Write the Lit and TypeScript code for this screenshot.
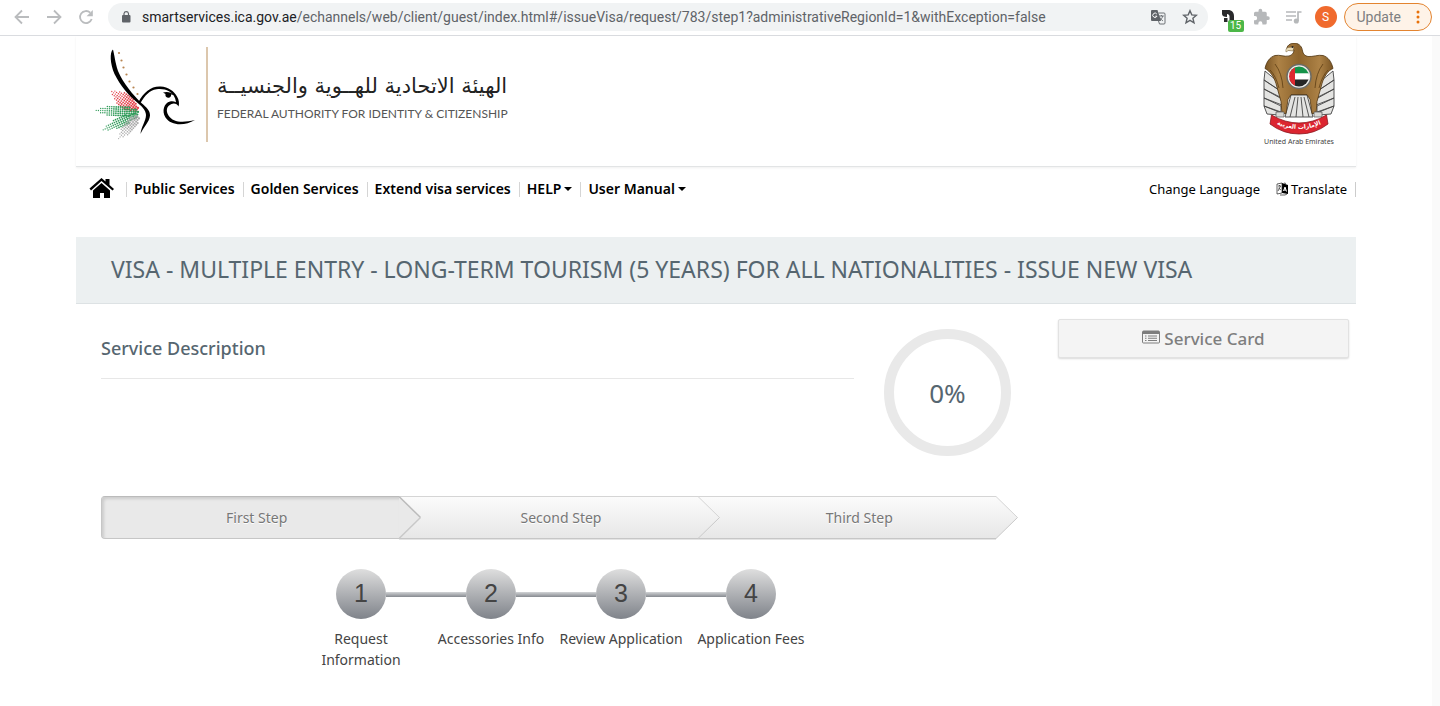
import { LitElement, html, css, svg } from "lit";
import { customElement } from "lit/decorators.js";

@customElement("browser-bar")
export class BrowserBar extends LitElement {
  static styles = css`
    :host { display: block; border-bottom: 1px solid #dadce0; background: #fff; }
    .bar { display: flex; align-items: center; box-sizing: border-box; height: 35px; padding: 0 8px 2px 12px; font-family: Roboto, sans-serif; }
    button { border: 0; background: none; padding: 0; display: grid; place-items: center; color: #5f6368; cursor: pointer; }
    .nav { display: flex; gap: 12px; }
    .nav button { width: 20px; height: 20px; color: #babcbe; }
    .omnibox { flex: 1; display: flex; align-items: center; gap: 10px; height: 28px; margin-left: 12px; padding: 0 10px 0 12px; border-radius: 14px; background: #f1f3f4; }
    .url { flex: 1; white-space: nowrap; overflow: hidden; font: 14px/20px Roboto, sans-serif; color: #5f6368; text-decoration: none; }
    .url b { font-weight: 400; color: #202124; }
    .omnibox button { width: 16px; height: 16px; margin-left: 6px; }
    .tools { display: flex; align-items: center; gap: 12px; margin-left: 9px; }
    .tools .ext { position: relative; width: 20px; height: 20px; }
    .count { position: absolute; right: -7px; bottom: -5px; width: 16px; height: 12px; border-radius: 2px; background: #4cb748; color: #fff; font: 10px/12px Roboto, sans-serif; }
    .tools .avatar { width: 22px; height: 22px; border-radius: 50%; background: #f06a2d; color: #fff; font: 12px Roboto, sans-serif; }
    .tools .update { display: flex; align-items: center; gap: 14px; box-sizing: border-box; height: 28px; margin-left: -5px; padding: 0 10px 0 12px; border: 1px solid #e38430; border-radius: 14px; background: #fef3e8; color: #7d7e80; font: 14px Roboto, sans-serif; }
  `;
  render() {
    return html`<div class="bar">
      <div class="nav">
        <button aria-label="Back"><svg width="20" height="20" viewBox="0 0 20 20" fill="none" stroke="currentColor" stroke-width="1.8"><path d="M17 10H4M10 3.500L3.500 10l6.500 6.500"/></svg></button>
        <button aria-label="Forward"><svg width="20" height="20" viewBox="0 0 20 20" fill="none" stroke="currentColor" stroke-width="1.800"><path d="M3 10h13M10 3.500L16.500 10L10 16.500"/></svg></button>
        <button aria-label="Reload"><svg width="20" height="20" viewBox="0 0 20 20" fill="none" stroke="currentColor" stroke-width="1.800"><path d="M15.700 12a6 6 0 1 1-1.500-6.300"/><path d="M16.800 3v6.200h-6.200z" fill="currentColor" stroke="none"/></svg></button>
      </div>
      <div class="omnibox">
        <svg width="12" height="14" viewBox="0 0 12 14"><rect x="2" y="5" width="8.500" height="7.500" rx="1" fill="#5f6368"/><path d="M4 5V3.500a2.300 2.300 0 0 1 4.500 0V5" fill="none" stroke="#5f6368" stroke-width="1.200"/></svg>
        <a class="url" href="#"><b>smartservices.ica.gov.ae</b>/echannels/web/client/guest/index.html#/issueVisa/request/783/step1?administrativeRegionId=1&amp;withException=false</a>
        <button aria-label="Translate this page"><svg width="16" height="16" viewBox="0 0 16 16"><path d="M2 1h5.500l3.500 11H2a1 1 0 0 1-1-1V2a1 1 0 0 1 1-1z" fill="#5f6368"/><path d="M6.800 5A2.200 2.200 0 1 0 7 7.200H5.200" fill="none" stroke="#fff"/><path d="M8.500 4H14a1 1 0 0 1 1 1v9a1 1 0 0 1-1 1H9.500l-1-3M8.800 7h5M11.400 6v1M12.800 7c-.5 2-1.800 3.500-3.200 4.500M10 8.500c.5 1.500 1.800 2.500 3 3.500" fill="none" stroke="#5f6368" stroke-width=".9"/></svg></button>
        <button aria-label="Bookmark"><svg width="16" height="16" viewBox="0 0 16 16"><path d="M8 1.700l1.800 4.200 4.600.4-3.500 3 1.100 4.500L8 11.400l-4 2.400 1.100-4.500-3.500-3 4.600-.4z" fill="none" stroke="#5f6368" stroke-width="1.400"/></svg></button>
      </div>
      <div class="tools">
        <button class="ext" aria-label="Extension"><svg width="20" height="20" viewBox="0 0 20 20"><path d="M5 3h6c4 0 6 2.500 6 6.500V15h-4.500V9.500C12.500 8 11.500 7 10 7v3C7 10 5 9 5 7z" fill="#2a2a2c"/><path d="M7 11h3.500v4H7z" fill="#2a2a2c"/></svg><span class="count">15</span></button>
        <button aria-label="Extensions"><svg width="22" height="18" viewBox="-4.500 0 29 24" fill="#b6b8ba"><path d="M20.500 11H19V7a2 2 0 0 0-2-2h-4V3.500a2.500 2.500 0 0 0-5 0V5H4a2 2 0 0 0-2 2v3.800h1.500a2.700 2.700 0 0 1 0 5.400H2V20a2 2 0 0 0 2 2h3.800v-1.500a2.700 2.700 0 0 1 5.400 0V22H17a2 2 0 0 0 2-2v-4h1.500a2.500 2.500 0 0 0 0-5z"/></svg></button>
        <button aria-label="Media"><svg width="20" height="16" viewBox="0 0 20 16" fill="none" stroke="#b6b8ba" stroke-width="1.700"><path d="M3 3h10M3 7h10M3 11h6M15 12V3h3.500"/><circle cx="13.300" cy="12" r="1.700" fill="#b6b8ba"/></svg></button>
        <button class="avatar" aria-label="Profile">S</button>
        <button class="update">Update<svg width="6" height="16" viewBox="0 0 6 16" fill="#e8710a"><circle cx="3" cy="3" r="1.500"/><circle cx="3" cy="8" r="1.500"/><circle cx="3" cy="13" r="1.500"/></svg></button>
      </div>
    </div>`;
  }
}

/* A feather of the falcon's tail: rows of dots that shrink towards the tip. */
function feather(color: string, ox: number, oy: number, angle: number, length: number, width: number) {
  const out = [];
  const a = (angle * Math.PI) / 180;
  for (let r = 4; r < length; r += 2.2) {
    const half = (width / 2) * Math.sin((Math.PI * r) / length);
    const n = Math.floor(half / 2.1);
    for (let k = -n; k <= n; k++) {
      const t = k * 2.1;
      const size = 0.6 + 0.6 * (1 - r / length);
      const x = ox + Math.cos(a) * r - Math.sin(a) * t;
      const y = oy + Math.sin(a) * r + Math.cos(a) * t;
      out.push(svg`<circle cx=${x.toFixed(1)} cy=${y.toFixed(1)} r=${size.toFixed(2)} fill=${color} />`);
    }
  }
  return out;
}

@customElement("authority-header")
export class AuthorityHeader extends LitElement {
  static styles = css`
    :host { display: block; }
    .head { display: flex; justify-content: space-between; align-items: flex-start; padding: 7px 21px 19px 18px; border-bottom: 1px solid #e2e4e5; box-shadow: 0 1px 2px #00000010; }
    .brand { display: flex; align-items: center; margin-top: 4px; text-decoration: none; }
    .bird { display: block; margin-right: 10px; }
    .names { display: flex; flex-direction: column; align-items: flex-start; height: 95px; box-sizing: border-box; padding: 23px 0 0 9px; border-left: 2px solid #dcc7ad; }
    .ar { font: 21px/32px "DejaVu Sans", sans-serif; color: #222; white-space: nowrap; }
    .en { font: 12px/24px Lato, sans-serif; color: #555; white-space: nowrap; }
    .emblem { display: flex; flex-direction: column; align-items: center; gap: 2px; font: 7px/10px "Noto Sans", sans-serif; color: #444; }
    .scroll { font: 700 6px "DejaVu Sans", sans-serif; fill: #fff; }
  `;
  render() {
    return html`<header class="head">
      <a class="brand" href="#">
        <svg class="bird" width="102" height="95" viewBox="0 0 102 95">
          ${feather("#e2404a", 46, 65, 216, 37, 15)}
          ${feather("#2f9a58", 48, 65, 182, 48, 12)}
          ${feather("#2f9a58", 47, 66, 156, 43, 10)}
          ${feather("#aaaaaa", 46, 67, 131, 34, 12)}
          <path d="M19 2.500C15.500 5 16 17 20.500 27c6 12 14 21 21 27 5.500 4.500 10.500 9 10.500 14 0 6-5 12-5.500 19 3-7 9-12 9.500-18.500.3-5-4-8.500-8-12C39 48 29 36 24 24 21 15 20.500 8 19 2.500z"/>
          <path d="M44.500 55c5.500-10 12.500-16 22-15.500 8 .5 13.500 4.500 16.500 10 2 3.500 2.500 7 1.500 10-1.200-2.500-4-3.800-7-2.500-5 2-6 7-3 11.500 4.500 7 14 7.500 26.500 4.500C91 79 77 79 71.500 70.500 67.500 64 70 56 76 54.500c2-.5 4-.3 6 .8-.5-5-3-8.500-7-11-3.500-2-8-2.800-12.500-2-7 1.200-11.500 6-16 13.700z"/>
          <path d="M69 45.500c4-1.300 8-.5 11.500 2.500l-3.500-.5c.5 2-1 3.500-3 3.200-2-.2-3-2-2.500-3.700z"/>
          <g fill="#b88552"><circle cx="25" cy="6" r="1.100"/><circle cx="27.500" cy="13.500" r="1.100"/><circle cx="29.500" cy="20.500" r="1.100"/><circle cx="32.500" cy="27.500" r="1.100"/><circle cx="35.500" cy="34.500" r="1.100"/><circle cx="39.500" cy="40.500" r="1.100"/><circle cx="43.500" cy="47" r="1.100"/></g>
        </svg>
        <span class="names"><span class="ar" lang="ar" dir="rtl">الهيئة الاتحادية للهــوية والجنسيــة</span><span class="en">FEDERAL AUTHORITY FOR IDENTITY &amp; CITIZENSHIP</span></span>
      </a>
      <div class="emblem">
        <svg width="72" height="92" viewBox="0 0 72 92">
          <defs>
            <linearGradient id="w" x2="1"><stop stop-color="#7a5524"/><stop offset=".2" stop-color="#ad8246"/><stop offset=".5" stop-color="#8d642d"/><stop offset=".8" stop-color="#ad8246"/><stop offset="1" stop-color="#7a5524"/></linearGradient>
            <clipPath id="c"><circle cx="36" cy="33.500" r="10"/></clipPath>
            <path id="r" d="M9 79q27 14 54 0"/>
          </defs>
          <g fill="#e4e4e2" stroke="#444" stroke-width=".9">
            <path d="M2 28l17 14v7L1 37zM1 37l18 12v6L1 46zM1 46l18 10v6L1 55zM1 55l17 8v6L1 63zM1 63l15 6v3L4 71z"/>
            <path d="M70 28L53 42v7l18-12zM71 37L53 49v6l18-9zM71 46L53 56v6l18-7zM71 55l-17 8v6l17-6zM71 63l-15 6v3l12-1z"/>
            <path d="M28 52h16l6 22H22z"/>
            <path d="M32 54l-5 20M35 54l-2 20M38 54l2 20M41 54l5 20" fill="none"/>
          </g>
          <path d="M24 7c-1-4 3-7 8-7 5 1 7 4 7.500 8 .5 3 2.500 5 5.500 5.500 5 .5 10-2 15-1 5 1.500 8.500 6 10 13-5 2-9 8-11 15l-5 18-1 12h-4l-2-14-3-5H28l-3 5-2 14h-4l-1-12-5-18C11 34 7 28 2 25.500c1.500-7 5-11.500 10-13 5-1 9 1.500 14 .5 3-.8 5-3 5-6z" fill="url(#w)" stroke="#4e3310" stroke-width=".8"/>
          <path d="M31 4l-6 .5c-2 .8-2.500 2.500-2 4.500l2.500-1.500 4.500.5z" fill="#eadcb8" stroke="#5b4320" stroke-width=".4"/><circle cx="29.500" cy="4" r=".9" fill="#222"/>
          <path d="M7 27q6 6 9 18M12 21q7 9 8 24M65 27q-6 6-9 18M60 21q-7 9-8 24" fill="none" stroke="#5d3d14" stroke-width=".8"/>
          <circle cx="36" cy="33.500" r="12" fill="#ececea" stroke="#6b6b66" stroke-width="1.500"/>
          <g clip-path="url(#c)"><path d="M26 23h20v7.500H26z" fill="#159349"/><path d="M26 30.500h20v6H26z" fill="#fff"/><path d="M26 36.500h20v8H26z" fill="#252525"/><path d="M26 23h6v21h-6z" fill="#df2931"/></g>
          <g fill="#d8d8d4" stroke="#555" stroke-width=".7"><path d="M13 69h8v5h-8zM51 69h8v5h-8z"/></g>
          <path d="M8.500 72q13.500 8 27.500 8t27.500-8l1.500 9q-13 10-29 10T7 81z" fill="#db2530" stroke="#8c1820" stroke-width=".8"/>
          <text class="scroll" text-anchor="middle"><textPath href="#r" startOffset="50%">الإمارات العربية</textPath></text>
        </svg>
        <span>United Arab Emirates</span>
      </div>
    </header>`;
  }
}

@customElement("main-menu")
export class MainMenu extends LitElement {
  static styles = css`
    :host { display: block; }
    nav { display: flex; align-items: center; padding: 10px 0 36px 13px; font: 14px/24px "Noto Sans", sans-serif; }
    a { display: flex; align-items: center; gap: 3px; height: 15px; color: #000; text-decoration: none; white-space: nowrap; }
    .item { padding: 0 8px 0 7px; border-left: 1px solid #d5d5d5; font-weight: 600; }
    .home { height: 24px; margin-right: 11px; }
    .right { display: flex; gap: 16px; margin-left: auto; padding-right: 8px; border-right: 1px solid #ccc; font-size: 13px; }
    .caret { border: 4px solid transparent; border-top: 4px solid #000; border-bottom: 0; }
  `;
  render() {
    const items = ["Public Services", "Golden Services", "Extend visa services", "HELP", "User Manual"];
    return html`<nav>
      <a class="home" href="#" aria-label="Home"><svg width="26" height="24" viewBox="0 0 26 24"><path d="M.5 11.500L12.500 1l4 3.500V2h4v6l4.500 4-1.500 1.500-11-9.500L2 13.500z"/><path d="M12.500 6l8.500 7.500V21h-6v-5h-4v5H4v-7.500z"/></svg></a>
      ${items.map((t, i) => html`<a class="item" href="#">${t}${i > 2 ? html`<span class="caret"></span>` : ""}</a>`)}
      <div class="right"><a href="#">Change Language</a><a href="#"><svg width="12" height="14" viewBox="0 0 12 14"><path d="M6 1l6 2v9l-6-1z"/><path d="M1 2l5-1v10l-5 1zM2 4h3M3.500 3v1M4.500 4L2 9M2.500 6L5 8M4 13h5l2-1M8 1l2 .5" fill="none" stroke="#222" stroke-width=".7"/><path d="M7.500 9L9 5l1.500 4.500M8 8h2" stroke="#fff" fill="none"/></svg>Translate</a></div>
    </nav>`;
  }
}

@customElement("step-bar")
export class StepBar extends LitElement {
  static styles = css`
    :host { display: block; }
    ol { display: flex; list-style: none; margin: 0; padding: 0 22px 0 0; }
    li { position: relative; flex: 1; }
    button { display: block; box-sizing: border-box; width: 100%; height: 43px; padding: 0 0 0 25px; border: 1px solid #d5d5d5; border-width: 1px 0; border-bottom-color: #c6c6c6; background: linear-gradient(#fbfbfb, #e7e7e7); color: #777; font: 14px/20px "Noto Sans", sans-serif; text-shadow: 0 1px #fff; box-shadow: 0 1px #e4e4e4; }
    .active button { padding-left: 12px; border-color: #bbb #c6c6c6 #c6c6c6; border-left-width: 1px; border-radius: 4px 0 0 4px; background: #e9e9e9; box-shadow: inset 2px 2px 3px #00000020; }
    .tip { position: absolute; z-index: 1; left: 100%; top: 0; display: block; }
  `;
  render() {
    return html`<ol>${["First Step", "Second Step", "Third Step"].map((t, i) => html`<li class=${i === 0 ? "active" : ""}>
      <button>${t}</button>
      <svg class="tip" width="23" height="43" viewBox="0 0 23 43">
        <defs><linearGradient id="tip${i}" x2="0" y2="1"><stop stop-color=${i ? "#fbfbfb" : "#e9e9e9"}/><stop offset="1" stop-color=${i ? "#e7e7e7" : "#e9e9e9"}/></linearGradient></defs>
        <path d="M0 .5L21.500 21.500L0 42.500z" fill="url(#tip${i})"/>
        <path d="M0 .5L21.500 21.500" fill="none" stroke=${i ? "#d5d5d5" : "#bbb"} stroke-width=${i ? 1 : 1.5}/>
        <path d="M21.500 21.500L0 42.500" fill="none" stroke="#c9c9c9" stroke-width=${i ? 1 : 1.5}/>
      </svg></li>`)}</ol>`;
  }
}

@customElement("stage-list")
export class StageList extends LitElement {
  static styles = css`
    :host { display: block; }
    ol { display: flex; justify-content: center; list-style: none; margin: 0; padding: 0; }
    li { display: flex; flex-direction: column; align-items: center; gap: 9px; width: 130px; font: 14px/21px "Noto Sans", sans-serif; color: #444; text-align: center; }
    .row { display: grid; grid-template-columns: 1fr 50px 1fr; align-items: center; width: 100%; }
    .line { height: 5px; background: linear-gradient(#d2d4d6, #868a90); }
    li:first-child .line:first-child, li:last-child .line:last-child { visibility: hidden; }
    .dot { height: 50px; border-radius: 50%; background: linear-gradient(#dedede, #7f838a); font: 25px/49px "Liberation Sans", sans-serif; }
    .text { white-space: pre-line; }
  `;
  render() {
    const stages = ["Request\nInformation", "Accessories Info", "Review Application", "Application Fees"];
    return html`<ol>${stages.map((t, i) => html`<li><span class="row"><span class="line"></span><span class="dot">${i + 1}</span><span class="line"></span></span><span class="text">${t}</span></li>`)}</ol>`;
  }
}

@customElement("app-root")
export class AppRoot extends LitElement {
  static styles = css`
    :host { display: flex; flex-direction: column; min-height: 100vh; background: #fff; font-family: "Noto Sans", sans-serif; }
    .view { flex: 1; display: grid; grid-template-columns: 1fr 8px; }
    .track { background: #fafafa; }
    .page { width: 100%; max-width: 1280px; margin: 0 auto; }
    h1 { margin: 0; padding: 16px 35px 17px; background: #ecf0f1; border-bottom: 1px solid #dde2e4; color: #566670; font-size: 23px; line-height: 33px; font-weight: 400; }
    .columns { display: grid; grid-template-columns: 3fr 1fr; }
    .main { padding: 25px 0 0; }
    .intro { display: flex; gap: 30px; align-items: flex-start; padding: 0 25px; }
    h2 { flex: 1; margin: 0; padding: 4px 0 14px; border-bottom: 1px solid #e7e7e7; color: #566670; font-size: 18px; line-height: 31px; font-weight: 500; }
    .ring { display: grid; place-items: center; box-sizing: border-box; width: 127px; height: 127px; border: 10px solid #e9e9e9; border-radius: 50%; color: #566670; font-size: 26px; line-height: 34px; }
    .steps { margin: 40px 18px 30px 25px; }
    aside { padding: 15px 7px 0 22px; }
    .card { display: flex; justify-content: center; align-items: center; gap: 4px; box-sizing: border-box; width: 100%; height: 39px; border: 1px solid #e2e2e2; border-radius: 2px; background: #f4f4f4; box-shadow: 0 1px 2px #00000026; color: #7e7e7e; font: 500 17px/24px "Noto Sans", sans-serif; }
  `;
  render() {
    return html`<browser-bar></browser-bar>
    <div class="view"><div class="page">
      <authority-header></authority-header>
      <main-menu></main-menu>
      <h1>VISA - MULTIPLE ENTRY - LONG-TERM TOURISM (5 YEARS) FOR ALL NATIONALITIES - ISSUE NEW VISA</h1>
      <div class="columns">
        <main class="main">
          <div class="intro"><h2>Service Description</h2><div class="ring">0%</div></div>
          <step-bar class="steps"></step-bar>
          <stage-list></stage-list>
        </main>
        <aside><button class="card"><svg width="18" height="20" viewBox="0 0 18 20"><path d="M1.500 2h15a1 1 0 0 1 1 1v10a1 1 0 0 1-1 1h-15a1 1 0 0 1-1-1V3a1 1 0 0 1 1-1z" fill="none" stroke="#7e7e7e"/><path d="M1 2h16v3H1zM3 6.500h1.500v1H3zM6 6.500h9v1H6zM3 8.700h1.500v1H3zM6 8.700h9v1H6zM3 11h1.500v1H3zM6 11h9v1H6z" fill="#7e7e7e"/></svg>Service Card</button></aside>
      </div>
    </div><div class="track"></div></div>`;
  }
}
